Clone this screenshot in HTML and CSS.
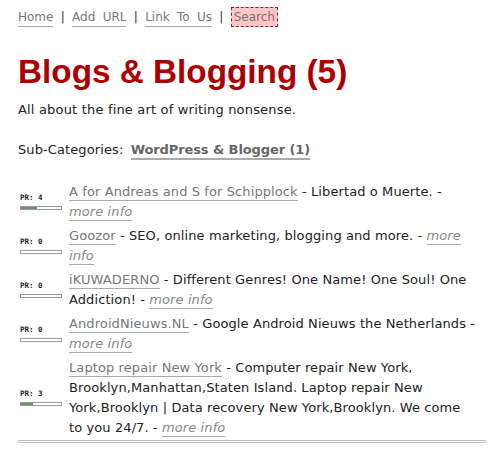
FILE: index.html
```html
<!DOCTYPE html>
<html>
<head>
<meta charset="utf-8">
<link rel="stylesheet" href="styles.css">
</head>
<body>
<div class="page">
  <nav class="nav"><a class="lnk" href="#">Home</a> | <a class="lnk" href="#">Add URL</a> | <a class="lnk" href="#">Link To Us</a> | <a class="search" href="#">Search</a></nav>
  <h1 class="title">Blogs &amp; Blogging (5)</h1>
  <p class="desc">All about the fine art of writing nonsense.</p>
  <p class="subcats">Sub-Categories: <a class="subcat" href="#">WordPress &amp; Blogger (1)</a></p>
  <div class="list">
    <div class="entry">
      <div class="pr"><span class="pr-label">PR: 4</span><span class="bar"><span class="fill" style="width:40%"></span></span></div>
      <div class="text"><a class="lnk" href="#">A for Andreas and S for Schipplock</a> - Libertad o Muerte. - <a class="more" href="#">more info</a></div>
    </div>
    <div class="entry">
      <div class="pr"><span class="pr-label">PR: 0</span><span class="bar"><span class="fill" style="width:0%"></span></span></div>
      <div class="text"><a class="lnk" href="#">Goozor</a> - SEO, online marketing, blogging and more. - <a class="more" href="#">more info</a></div>
    </div>
    <div class="entry">
      <div class="pr"><span class="pr-label">PR: 0</span><span class="bar"><span class="fill" style="width:0%"></span></span></div>
      <div class="text"><a class="lnk" href="#">iKUWADERNO</a> - Different Genres! One Name! One Soul! One Addiction! - <a class="more" href="#">more info</a></div>
    </div>
    <div class="entry">
      <div class="pr"><span class="pr-label">PR: 0</span><span class="bar"><span class="fill" style="width:0%"></span></span></div>
      <div class="text"><a class="lnk" href="#">AndroidNieuws.NL</a> - Google Android Nieuws the Netherlands - <a class="more" href="#">more info</a></div>
    </div>
    <div class="entry">
      <div class="pr"><span class="pr-label">PR: 3</span><span class="bar"><span class="fill" style="width:30%"></span></span></div>
      <div class="text"><a class="lnk" href="#">Laptop repair New York</a> - Computer repair New York, Brooklyn,Manhattan,Staten Island. Laptop repair New York,Brooklyn | Data recovery New York,Brooklyn. We come to you 24/7. - <a class="more" href="#">more info</a></div>
    </div>
  </div>
  <div class="rule"></div>
</div>
</body>
</html>
```

FILE: styles.css
```css
html, body {
  margin: 0;
  padding: 0;
  background: #fff;
}
body {
  font-family: "DejaVu Sans", Verdana, sans-serif;
  font-size: 13px;
  line-height: 20px;
  color: #222;
  letter-spacing: 0.1px;
}
.page {
  width: 468px;
  padding: 7px 0 0 18px;
}
.desc {
  margin: 8px 0 0 0;
  letter-spacing: 0.18px;
}
.nav {
  font-size: 12px;
  line-height: 20px;
  color: #333;
  letter-spacing: 0;
  word-spacing: 3.5px;
}
.lnk {
  color: #777;
  text-decoration: none;
  border-bottom: 1px solid #aaa;
  padding-bottom: 1px;
}
.nav .lnk {
  padding-bottom: 2px;
}
.search {
  color: #777;
  text-decoration: none;
  background: #ffc4c4;
  border: 1px dashed #7a2a2a;
  padding: 2px 2px;
  word-spacing: 0;
}
.title {
  margin: 25px 0 0 0;
  font-family: "Liberation Sans", Arial, sans-serif;
  font-weight: bold;
  font-size: 33.3px;
  line-height: 40px;
  letter-spacing: 0;
  color: #aa0000;
}
.subcats {
  margin: 20px 0 0 0;
}
.subcat {
  color: #666;
  font-weight: bold;
  letter-spacing: -0.1px;
  text-decoration: none;
  border-bottom: 2px solid #aaa;
  padding-bottom: 1px;
  margin-left: 3px;
}
.list {
  margin-top: 20px;
}
.entry {
  display: flex;
  align-items: center;
  padding: 2px 0;
}
.pr {
  width: 49px;
  padding-left: 2px;
  flex: none;
  display: flex;
  flex-direction: column;
  align-items: flex-start;
  gap: 5px;
}
.pr-label {
  font-family: "DejaVu Sans Mono", monospace;
  font-weight: bold;
  font-size: 7.5px;
  line-height: 7px;
  letter-spacing: 0;
  color: #222;
}
.bar {
  display: block;
  width: 40px;
  height: 2px;
  border: 1px solid #999;
  background: #fff;
}
.fill {
  display: block;
  height: 100%;
  background: #669966;
}
.text {
  width: 407px;
}
.more {
  color: #888;
  font-style: italic;
  text-decoration: none;
  border-bottom: 1px solid #aaa;
  padding-bottom: 1px;
}
.rule {
  height: 0;
  border-top: 3px double #bbb;
}
```
